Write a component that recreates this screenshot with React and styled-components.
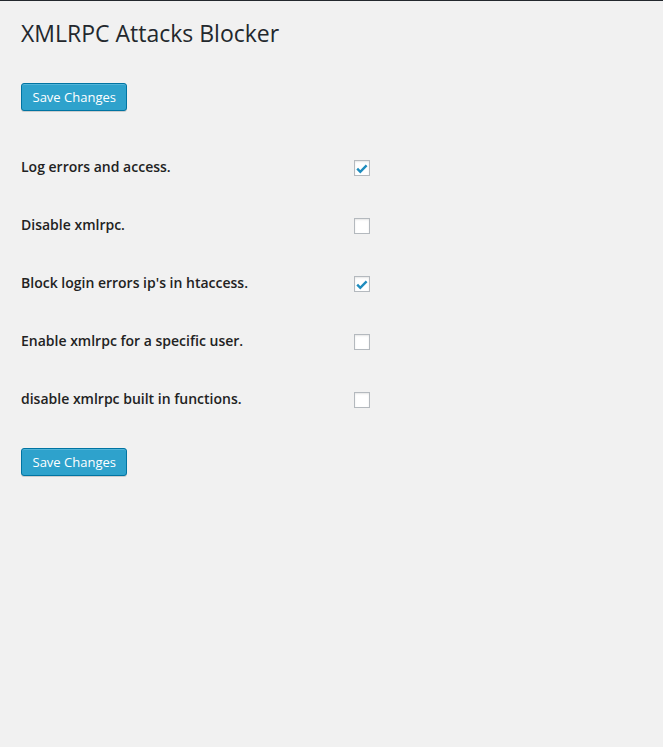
import React, { useState } from "react";
import styled, { createGlobalStyle } from "styled-components";

const Global = createGlobalStyle`
  html, body { margin: 0; padding: 0; }
  body {
    background: #f1f1f1;
    font-family: "Open Sans", "Noto Sans", sans-serif;
    color: #444;
    min-height: 747px;
  }
`;

const Page = styled.div`
  border-top: 1px solid #23282d;
  padding: 17px 21px 40px;
`;

const Title = styled.h1`
  margin: 0;
  font-size: 23px;
  font-weight: 400;
  line-height: 30px;
  color: #23282d;
`;

const Button = styled.button`
  display: inline-flex;
  align-items: center;
  height: 28px;
  padding: 0 10.5px;
  margin-top: ${(p) => p.$top}px;
  font-family: "Open Sans", "Noto Sans", sans-serif;
  font-size: 13px;
  color: #fff;
  background: #2ea2cc;
  border: 1px solid #0074a2;
  border-radius: 3px;
  box-shadow: inset 0 1px 0 rgba(120, 200, 230, 0.5), 0 1px 0 rgba(0, 0, 0, 0.15);
  cursor: pointer;
  box-sizing: border-box;
`;

const Table = styled.div`
  margin-top: 27px;
  display: grid;
  grid-template-columns: 333px 1fr;
`;

const Label = styled.label`
  height: 58px;
  display: flex;
  align-items: center;
  font-size: 14px;
  font-weight: 600;
  line-height: 1.3;
  color: #222;
`;

const Cell = styled.div`
  height: 58px;
  display: flex;
  align-items: center;
  padding-top: 1px;
  box-sizing: border-box;
`;

const Box = styled.span`
  width: 16px;
  height: 16px;
  box-sizing: border-box;
  border: 1px solid #b4b9be;
  background: #fff;
  box-shadow: inset 0 1px 2px rgba(0, 0, 0, 0.1);
  display: block;
  position: relative;
  cursor: pointer;
  svg { position: absolute; left: -1px; top: -1px; }
`;

function Checkbox({ checked, onChange }) {
  return (
    <Box role="checkbox" aria-checked={checked} onClick={onChange}>
      {checked && (
        <svg width="16" height="16" viewBox="0 0 16 16">
          <polyline points="3.2,8.6 6.3,11.8 12.6,5.4" fill="none" stroke="#1e8cbe" strokeWidth="2.4" strokeLinecap="butt" strokeLinejoin="miter" />
        </svg>
      )}
    </Box>
  );
}

const options = [
  ["Log errors and access.", true],
  ["Disable xmlrpc.", false],
  ["Block login errors ip's in htaccess.", true],
  ["Enable xmlrpc for a specific user.", false],
  ["disable xmlrpc built in functions.", false],
];

export default function App() {
  const [vals, setVals] = useState(options.map((o) => o[1]));
  return (
    <>
      <Global />
      <Page>
        <Title>XMLRPC Attacks Blocker</Title>
        <Button $top={35}>Save Changes</Button>
        <Table>
          {options.map(([label], i) => (
            <React.Fragment key={label}>
              <Label>{label}</Label>
              <Cell>
                <Checkbox
                  checked={vals[i]}
                  onChange={() => setVals(vals.map((v, j) => (j === i ? !v : v)))}
                />
              </Cell>
            </React.Fragment>
          ))}
        </Table>
        <Button $top={20}>Save Changes</Button>
      </Page>
    </>
  );
}
